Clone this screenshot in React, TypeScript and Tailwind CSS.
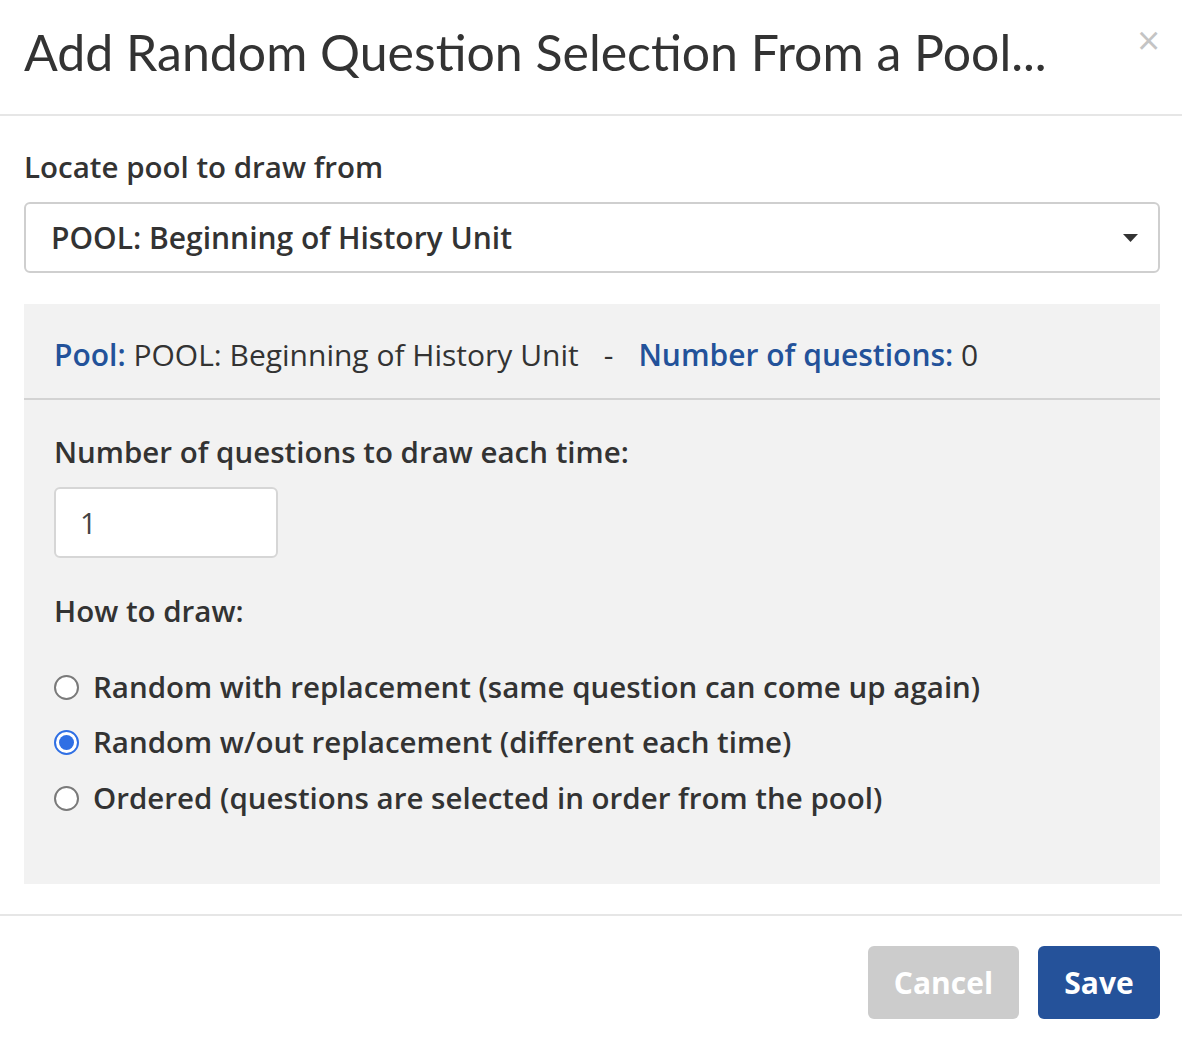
import React, { useState } from 'react';

const options = [
  { id: 'with', label: 'Random with replacement (same question can come up again)' },
  { id: 'without', label: 'Random w/out replacement (different each time)' },
  { id: 'ordered', label: 'Ordered (questions are selected in order from the pool)' },
];

const Radio = ({ checked }: { checked: boolean }) =>
  checked ? (
    <span className="flex h-[25px] w-[25px] shrink-0 items-center justify-center rounded-full border-2 border-[#2f6fe4] bg-white">
      <span className="h-[15px] w-[15px] rounded-full bg-[#2f6fe4]" />
    </span>
  ) : (
    <span className="h-[25px] w-[25px] shrink-0 rounded-full border-2 border-[#7a7a7a] bg-white" />
  );

export default function App() {
  const [mode, setMode] = useState('without');

  return (
    <div
      className="flex h-[1038px] w-[1182px] flex-col bg-white text-[#333333]"
      style={{ fontFamily: '"Open Sans", Lato, sans-serif' }}
    >
      {/* header */}
      <div className="flex h-[116px] items-start justify-between border-b-2 border-[#e6e6e6] pl-[24px] pr-[22px]">
        <h1
          className="mt-[22px] text-[50px] leading-[60px] font-normal text-[#333333]"
          style={{ fontFamily: 'Lato, sans-serif' }}
        >
          Add Random Question Selection From a Pool...
        </h1>
        <button className="mt-[22px] text-[40px] leading-[36px] text-[#c4c4c4]">×</button>
      </div>

      {/* body */}
      <div className="flex flex-col pt-[33px] pr-[22px] pb-[30px] pl-[24px]">
        <label className="text-[29.5px] leading-[36px] font-semibold">Locate pool to draw from</label>
        <div className="mt-[17px] flex h-[71px] items-center justify-between rounded-[6px] border-2 border-[#cfcfcf] pr-[20px] pl-[25px]">
          <span className="text-[30px] font-semibold">POOL: Beginning of History Unit</span>
          <svg width="15" height="8" viewBox="0 0 15 8">
            <path d="M0 0h15L7.5 8z" fill="#333333" />
          </svg>
        </div>

        <div className="mt-[31px] flex flex-col bg-[#f2f2f2]">
          <div className="flex h-[96px] items-center border-b-2 border-[#d3d3d3] px-[30px] pt-[6px] text-[30px]">
            <span>
              <span className="font-semibold text-[#23529a]">Pool:</span> POOL: Beginning of History Unit
            </span>
            <span className="px-[25px]">-</span>
            <span>
              <span className="font-semibold text-[#23529a]">Number of questions:</span> 0
            </span>
          </div>

          <div className="flex flex-col px-[30px] pt-[34px] pb-[68px]">
            <div className="text-[29.5px] leading-[36px] font-semibold">Number of questions to draw each time:</div>
            <input
              defaultValue="1"
              className="mt-[17px] h-[71px] w-[224px] rounded-[6px] border-2 border-[#d6d6d6] bg-white px-[24px] text-[29px] text-[#444444] outline-none"
            />
            <div className="mt-[35px] text-[29.5px] leading-[36px] font-semibold">How to draw:</div>
            <div className="mt-[40px] flex flex-col gap-[19.5px]">
              {options.map((o) => (
                <label
                  key={o.id}
                  onClick={() => setMode(o.id)}
                  className="flex h-[36px] cursor-pointer items-center gap-[14px] text-[29.5px] font-semibold"
                >
                  <Radio checked={mode === o.id} />
                  {o.label}
                </label>
              ))}
            </div>
          </div>
        </div>
      </div>

      {/* footer */}
      <div className="flex justify-end gap-[19px] border-t-2 border-[#e6e6e6] px-[22px] pt-[30px]">
        <button className="h-[73px] w-[151px] rounded-[6px] bg-[#cccccc] text-[30px] font-bold text-white">
          Cancel
        </button>
        <button className="h-[73px] w-[122px] rounded-[6px] bg-[#25529a] text-[30px] font-bold text-white">
          Save
        </button>
      </div>
    </div>
  );
}
